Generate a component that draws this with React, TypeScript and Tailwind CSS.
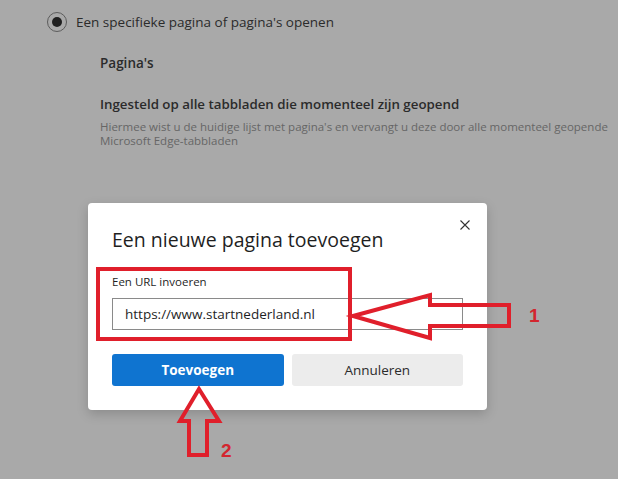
import React from 'react';

const Annotations: React.FC = () => (
    <svg className="pointer-events-none absolute inset-0" width="618" height="479" viewBox="0 0 618 479">
        <g fill="none" stroke="#e01f2b" strokeWidth="4" strokeLinejoin="miter">
            {/* box round the URL field */}
            <rect x="98" y="269" width="252" height="70" />
            {/* arrow 1 */}
            <polygon points="353,316 430,295 430,305 509,305 509,326 430,326 430,338" />
            {/* arrow 2 */}
            <polygon points="199,389 180,421 189,421 189,455 207,455 207,421 219,421" />
        </g>
        <text x="529" y="322" fill="#d3252e" fontSize="19" fontWeight="700" fontFamily="'Liberation Sans', sans-serif">1</text>
        <text x="221" y="457" fill="#d3252e" fontSize="19" fontWeight="700" fontFamily="'Liberation Sans', sans-serif">2</text>
    </svg>
);

const App: React.FC = () => {
    return (
        <div className="relative h-[479px] w-[618px] overflow-hidden bg-[#a9a9a9] font-['Open_Sans',sans-serif] text-[#2b2b2b]">
            {/* Settings page behind the overlay */}
            <div className="flex items-center gap-[9px] pl-[47px] pt-[12px]">
                <span className="flex h-5 w-5 items-center justify-center rounded-full border border-[#5c5c5c]">
                    <span className="h-[10px] w-[10px] rounded-full bg-[#1f1f1f]" />
                </span>
                <span className="text-[13.5px] leading-5">Een specifieke pagina of pagina's openen</span>
            </div>
            <div className="pl-[100px]">
                <p className="mt-[21px] text-[13.5px] font-semibold leading-5">Pagina's</p>
                <p className="mt-[21px] text-[13.3px] font-semibold leading-5">Ingesteld op alle tabbladen die momenteel zijn geopend</p>
                <p className="mt-[6px] w-[510px] text-[11.5px] leading-[14px] text-[#666666]">
                    Hiermee wist u de huidige lijst met pagina's en vervangt u deze door alle momenteel geopende Microsoft Edge-tabbladen
                </p>
            </div>

            {/* Dialog */}
            <div className="absolute left-[88px] top-[203px] w-[399px] rounded-[4px] bg-white px-6 pb-6 pt-[23px] shadow-[0_4px_12px_rgba(0,0,0,0.18)]">
                <button className="absolute right-[14px] top-[14px] flex h-4 w-4 items-center justify-center text-[#333]">
                    <svg width="10" height="10" viewBox="0 0 10 10" stroke="currentColor" strokeWidth="1.1">
                        <path d="M0.5 0.5 9.5 9.5M9.5 0.5 0.5 9.5" />
                    </svg>
                </button>
                <h2 className="text-[19.5px] leading-[28px] text-[#1f1f1f]">Een nieuwe pagina toevoegen</h2>
                <label className="mt-[20px] block text-[11.5px] leading-4 text-[#1f1f1f]">Een URL invoeren</label>
                <div className="mt-[8px] flex h-8 items-center border border-[#8a8a8a] px-3 text-[13.5px] text-[#1f1f1f]">
                    https://www.startnederland.nl
                </div>
                <div className="mt-6 flex gap-2">
                    <button className="h-8 flex-1 rounded-[3px] bg-[#0f74d0] text-[13.5px] font-bold text-white">Toevoegen</button>
                    <button className="h-8 flex-1 rounded-[3px] bg-[#ececec] text-[13.5px] text-[#2b2b2b]">Annuleren</button>
                </div>
            </div>

            <Annotations />
        </div>
    );
};

export default App;
